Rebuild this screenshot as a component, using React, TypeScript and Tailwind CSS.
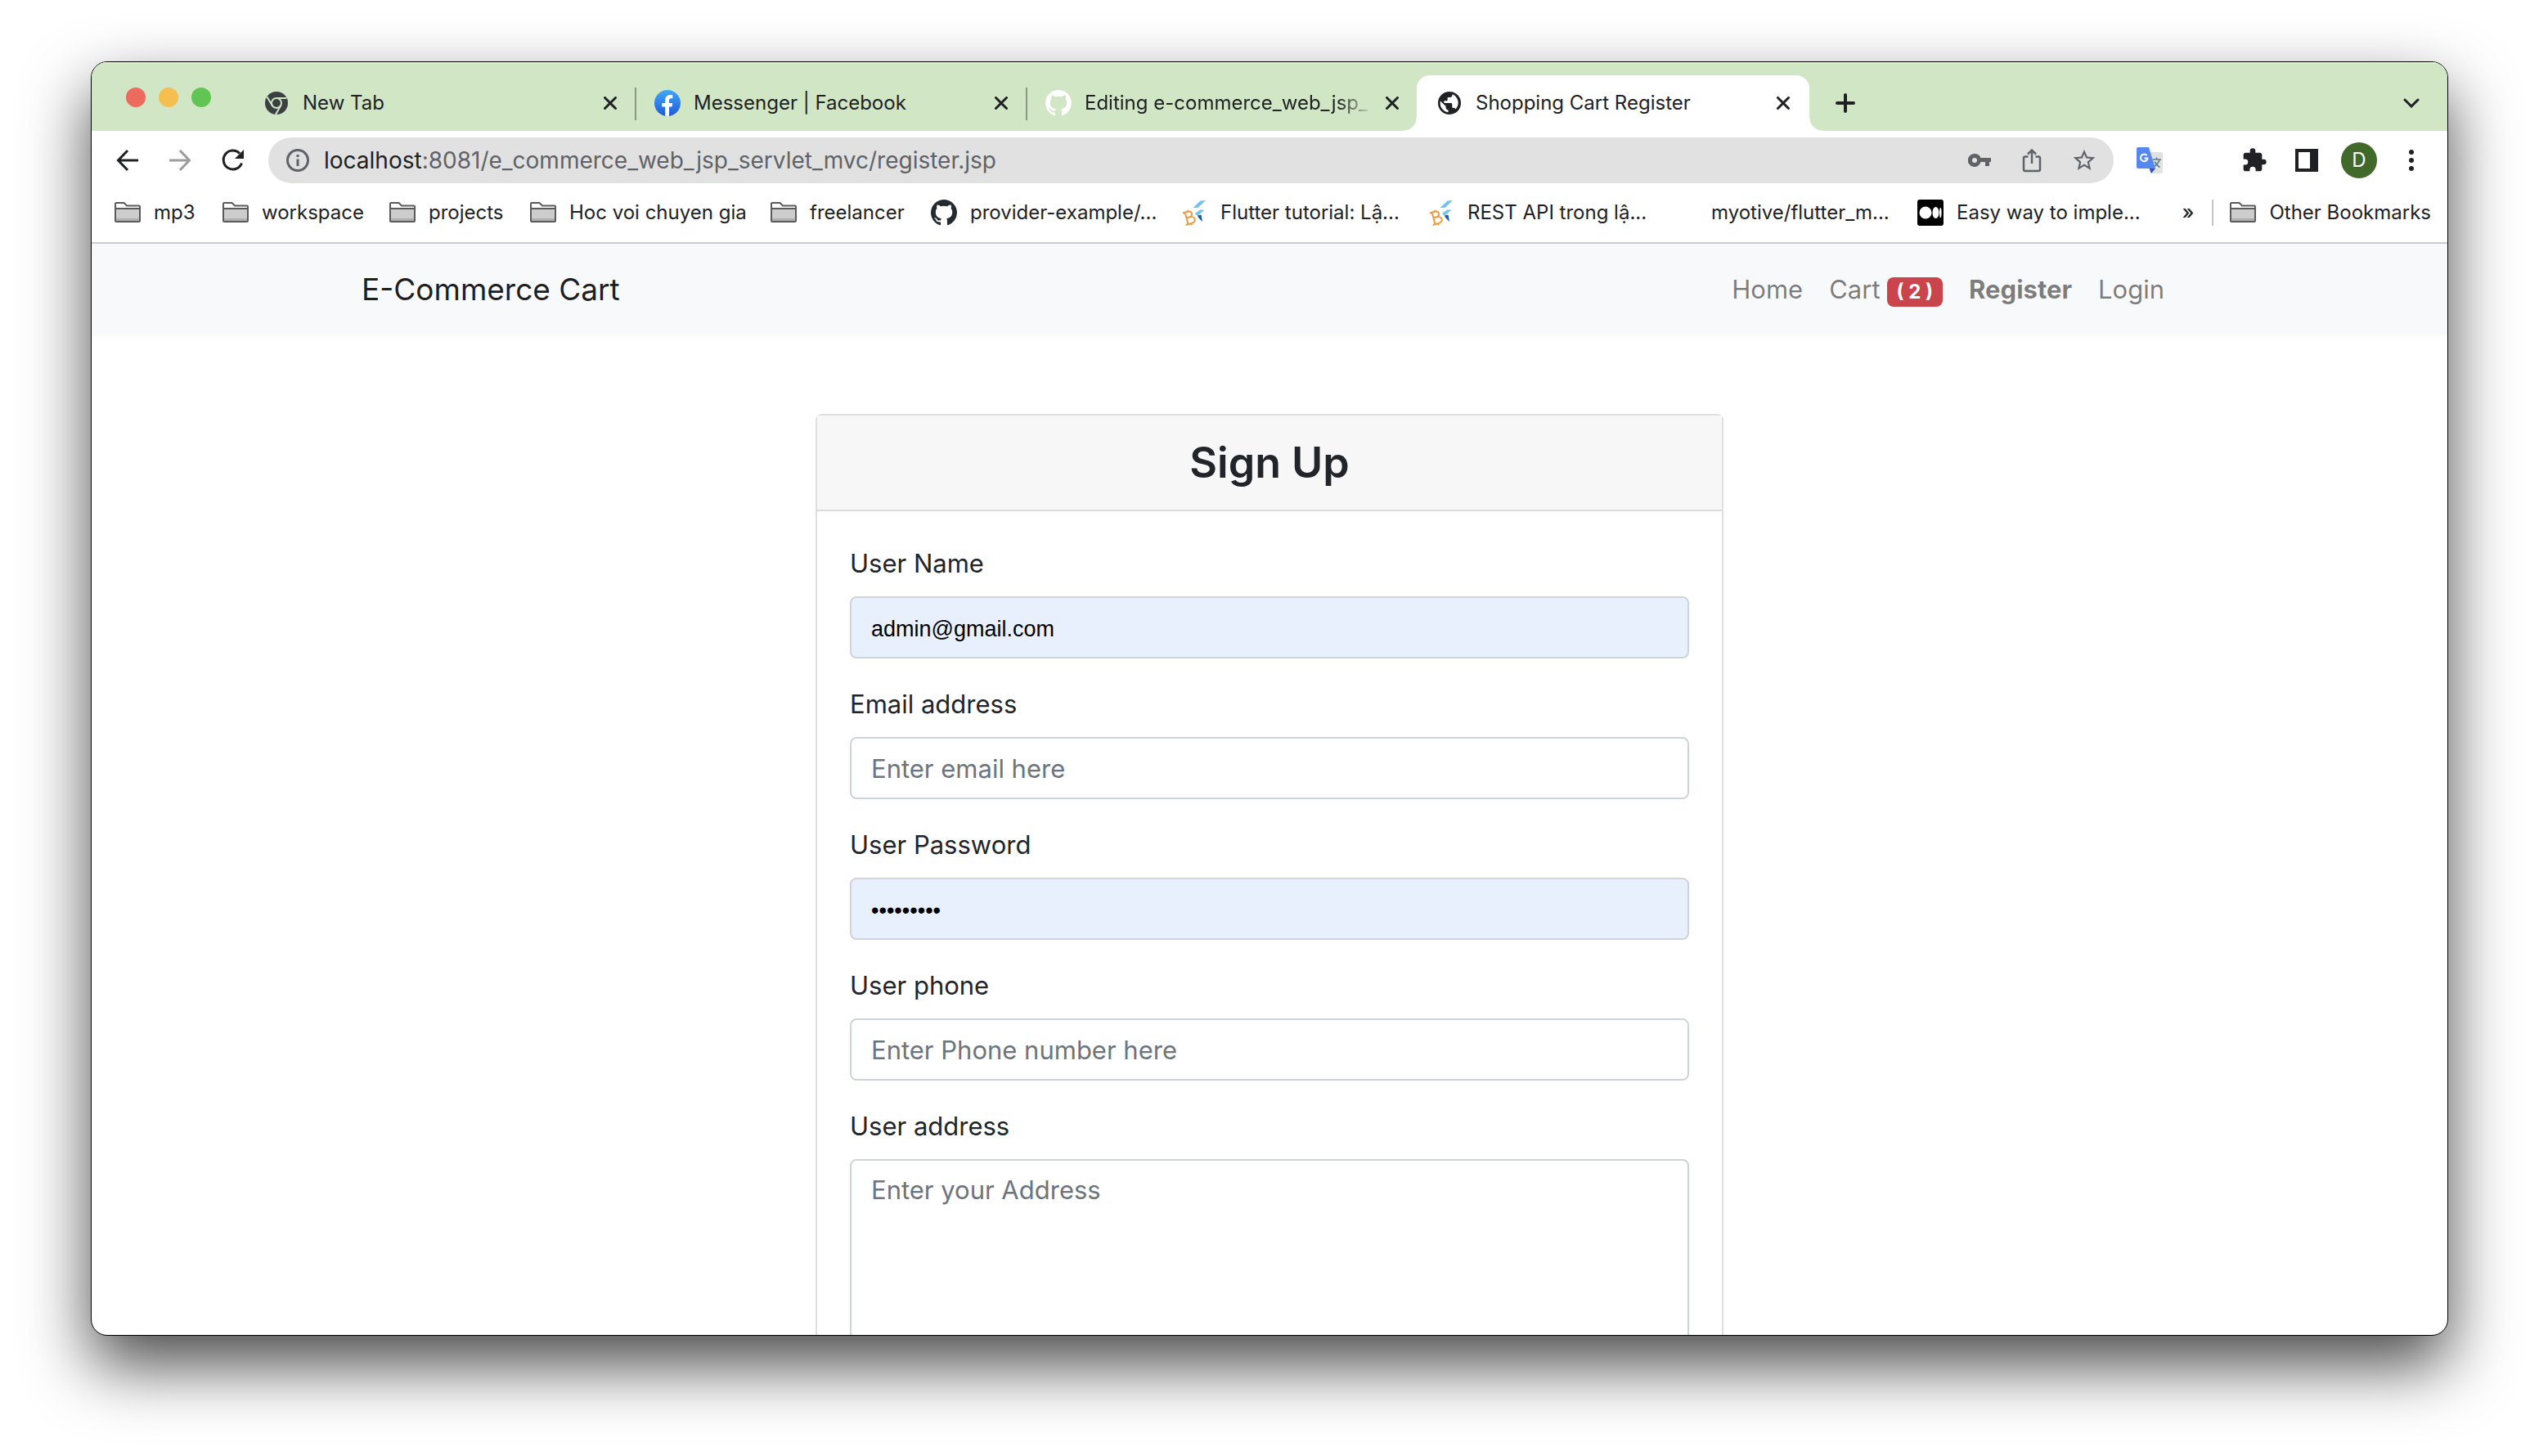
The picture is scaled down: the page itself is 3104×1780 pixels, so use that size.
import React from "react";

type IconProps = { className?: string };

const ChromeIcon = () => (
  <svg viewBox="0 0 28 28" className="size-7">
    <circle cx="14" cy="14" r="14" fill="#3c4043" />
    <circle cx="14" cy="14" r="6" fill="none" stroke="#d1e6c4" strokeWidth="2" />
    <path d="M14 8H26.5M8.8 17L2.5 6.5M19.2 17L13 28" fill="none" stroke="#d1e6c4" strokeWidth="2" />
  </svg>
);

const FacebookIcon = () => (
  <svg viewBox="0 0 32 32" className="size-8">
    <defs>
      <linearGradient id="fb" x1="0" y1="0" x2="0" y2="1">
        <stop offset="0" stopColor="#3fa9f8" />
        <stop offset="1" stopColor="#2158d8" />
      </linearGradient>
    </defs>
    <circle cx="16" cy="16" r="16" fill="url(#fb)" />
    <path
      d="M13.2 31.8V20.6H9.2V16h4v-3.4c0-4.2 2.4-6.5 6.2-6.5 1.3 0 2.9.3 2.9.3v3.9h-1.8c-1.9 0-2.5 1-2.5 2.3V16h4.2l-.7 4.6H18v11.2z"
      fill="#fff"
    />
  </svg>
);

const GithubIcon = ({ className = "" }: IconProps) => (
  <svg viewBox="0 0 16 16" className={`size-8 ${className}`} fill="currentColor">
    <path d="M8 0C3.58 0 0 3.58 0 8c0 3.54 2.29 6.53 5.47 7.59.4.07.55-.17.55-.38 0-.19-.01-.82-.01-1.49-2.01.37-2.53-.49-2.69-.94-.09-.23-.48-.94-.82-1.13-.28-.15-.68-.52-.01-.53.63-.01 1.08.58 1.23.82.72 1.21 1.87.87 2.33.66.07-.52.28-.87.51-1.07-1.78-.2-3.64-.89-3.64-3.95 0-.87.31-1.59.82-2.15-.08-.2-.36-1.02.08-2.12 0 0 .67-.21 2.2.82.64-.18 1.32-.27 2-.27s1.36.09 2 .27c1.53-1.04 2.2-.82 2.2-.82.44 1.1.16 1.92.08 2.12.51.56.82 1.27.82 2.15 0 3.07-1.87 3.75-3.65 3.95.29.25.54.73.54 1.48 0 1.07-.01 1.93-.01 2.2 0 .21.15.46.55.38A8.01 8.01 0 0 0 16 8c0-4.42-3.58-8-8-8z" />
  </svg>
);

const GlobeIcon = () => (
  <svg viewBox="0 0 28 28" className="size-7">
    <circle cx="14" cy="14" r="14" fill="#202124" />
    <path
      d="M17.5 3.2v.9c0 1.7-1.3 3-2.9 3h-2.9v2.8c0 .8-.7 1.4-1.5 1.4H7.4V14h8.5c.8 0 1.4.7 1.4 1.5v4.2h1.5c1.3 0 2.3.8 2.7 1.9A11.3 11.3 0 0 0 17.5 3.2zM12.5 25.2v-2.8c-1.6 0-2.9-1.3-2.9-2.9v-1.4L2.9 11.5A11.3 11.3 0 0 0 12.5 25.2z"
      fill="#fff"
    />
  </svg>
);

const CloseIcon = () => (
  <svg viewBox="0 0 16 16" className="size-4" stroke="#202124" strokeWidth="3" strokeLinecap="round">
    <path d="M1.5 1.5l13 13M14.5 1.5l-13 13" />
  </svg>
);

const FolderIcon = () => (
  <svg viewBox="0 0 32 32" className="size-8 shrink-0">
    <path d="M1 11h30v15.500H1z" fill="#cdcdcd" />
    <path d="M1 23h30v4H1z" fill="#b0b0b0" />
    <path
      d="M2 4h9.500l3.500 3.500h15a1 1 0 0 1 1 1V26a1 1 0 0 1-1 1H2a1 1 0 0 1-1-1V5a1 1 0 0 1 1-1zM1 11h30"
      fill="none"
      stroke="#5a5a5a"
      strokeWidth="2"
    />
  </svg>
);

const FlutterBIcon = () => (
  <svg viewBox="0 0 32 32" className="size-8 shrink-0">
    <path d="M14.500 10L23.500 1.500 30 1 20.500 10z" fill="#6fc4f0" />
    <path d="M17 17l6-4.500h5.500L20 20z" fill="#6fc4f0" />
    <path d="M20 19.500l4.500-1 1.500 8.500-5-5z" fill="#1f5a9c" />
    <g transform="rotate(-15 10 22)" fill="none" stroke="#ee9b3f" strokeWidth="2">
      <path d="M6.500 14v16M3.500 14.500H10c5.500 0 5.500 7 0 7H6.500M10 21.500c8 0 8 8 0 8H3.500M10.500 12.500v2M10.500 29.500v2" />
    </g>
  </svg>
);

const MediumIcon = () => (
  <svg viewBox="0 0 32 32" className="size-8 shrink-0">
    <rect width="32" height="32" rx="3" fill="#000" />
    <circle cx="10" cy="16" r="7.500" fill="#fff" />
    <ellipse cx="22.500" cy="16" rx="4" ry="7" fill="#fff" />
    <ellipse cx="28.300" cy="16" rx="1.300" ry="6.300" fill="#fff" />
  </svg>
);

const TranslateIcon = () => (
  <svg viewBox="0 0 32 32" className="size-8">
    <path d="M12 6h18a2 2 0 0 1 2 2V30a2 2 0 0 1-2 2H18z" fill="#e2e2e2" />
    <path d="M15.500 26H23l-5 6z" fill="#3b4fb8" />
    <path d="M2 0h13L23 26H2a2 2 0 0 1-2-2V2a2 2 0 0 1 2-2z" fill="#5588ee" />
    <path d="M12.600 10.200A4.300 4.300 0 1 0 13.500 13.400H9.500" fill="none" stroke="#fff" strokeWidth="2" />
    <path d="M19.500 15H30M24.500 12.500v2.500M28 15c-1 4-4 7-6.500 8.500M22 17.500c1.500 3 3.500 5 6.500 7" fill="none" stroke="#607d8b" strokeWidth="1.700" />
  </svg>
);

type Tab = { title: string; icon: React.ReactNode; active?: boolean; divided?: boolean; faded?: boolean };

const tabs: Tab[] = [
  { title: "New Tab", icon: <ChromeIcon />, divided: true },
  { title: "Messenger | Facebook", icon: <FacebookIcon />, divided: true },
  { title: "Editing e-commerce_web_jsp_", icon: <GithubIcon className="text-white" />, faded: true },
  { title: "Shopping Cart Register", icon: <GlobeIcon />, active: true },
];

type Bookmark = { title: string; icon: React.ReactNode; width: string };

const bookmarks: Bookmark[] = [
  { title: "mp3", icon: <FolderIcon />, width: "w-[132px]" },
  { title: "workspace", icon: <FolderIcon />, width: "w-[204px]" },
  { title: "projects", icon: <FolderIcon />, width: "w-[172px]" },
  { title: "Hoc voi chuyen gia", icon: <FolderIcon />, width: "w-[294px]" },
  { title: "freelancer", icon: <FolderIcon />, width: "w-[196px]" },
  { title: "provider-example/...", icon: <GithubIcon className="shrink-0 text-[#24292f]" />, width: "w-[306px]" },
  { title: "Flutter tutorial: Lậ...", icon: <FlutterBIcon />, width: "w-[302px]" },
  { title: "REST API trong lậ...", icon: <FlutterBIcon />, width: "w-[298px]" },
  { title: "myotive/flutter_m...", icon: <span className="size-8 shrink-0" />, width: "w-[300px]" },
  { title: "Easy way to imple...", icon: <MediumIcon />, width: "w-[300px]" },
];

function TabStrip() {
  return (
    <div className="flex h-[84px] items-end border-t-2 border-[#dcf0cf] bg-[#d1e6c4] pr-7">
      <div className="flex h-full w-[188px] shrink-0 items-center gap-4 pl-[42px]">
        <button aria-label="Close window" className="size-6 rounded-full bg-[#ed6a5e]" />
        <button aria-label="Minimize window" className="size-6 rounded-full bg-[#f5bf4f]" />
        <button aria-label="Zoom window" className="size-6 rounded-full bg-[#61c554]" />
      </div>
      <div role="tablist" className="flex items-end">
        {tabs.map((tab) => (
          <div
            key={tab.title}
            role="tab"
            aria-selected={!!tab.active}
            className={`relative flex h-[68px] items-center pr-4 ${tab.active ? "-ml-0.5 w-[480px] rounded-t-2xl bg-white pl-6" : "w-[478px] pl-[22px]"}`}
          >
            {tab.active && (
              <>
                <span className="absolute bottom-0 -left-4 size-4 bg-[radial-gradient(circle_at_0_0,#d1e6c4_15px,#fff_16px)]" />
                <span className="absolute -right-4 bottom-0 size-4 bg-[radial-gradient(circle_at_100%_0,#d1e6c4_15px,#fff_16px)]" />
              </>
            )}
            <span className="flex w-8 shrink-0 justify-center">{tab.icon}</span>
            <span
              className={`ml-4 min-w-0 flex-1 text-2xl whitespace-nowrap ${tab.faded ? "[mask-image:linear-gradient(to_right,#000_88%,transparent)]" : ""}`}
            >
              {tab.title}
            </span>
            <button aria-label={`Close ${tab.title}`} className="ml-2 flex size-8 shrink-0 items-center justify-center">
              <CloseIcon />
            </button>
            {tab.divided && <span className="absolute top-[15px] right-0 h-10 w-0.5 bg-[#8a9a82]" />}
          </div>
        ))}
      </div>
      <button aria-label="New tab" className="ml-7 flex h-[68px] w-8 items-center justify-center">
        <svg viewBox="0 0 24 24" className="size-6" stroke="#202124" strokeWidth="4" strokeLinecap="round">
          <path d="M12 2v20M2 12h20" />
        </svg>
      </button>
      <button aria-label="Search tabs" className="ml-auto flex h-[68px] w-8 items-center justify-center">
        <svg viewBox="0 0 20 12" className="h-3 w-5" fill="none" stroke="#202124" strokeWidth="3" strokeLinecap="round">
          <path d="M2 2l8 8 8-8" />
        </svg>
      </button>
    </div>
  );
}

function Toolbar() {
  return (
    <div className="flex h-[72px] items-center pr-7 pl-7">
      <button aria-label="Back" className="flex w-8 justify-center">
        <svg viewBox="0 0 28 28" className="size-7" fill="none" stroke="#202124" strokeWidth="3">
          <path d="M27 14H3M14 2L2.500 14 14 26" />
        </svg>
      </button>
      <button aria-label="Forward" className="ml-8 flex w-8 justify-center">
        <svg viewBox="0 0 28 28" className="size-7" fill="none" stroke="#9b9c9d" strokeWidth="3">
          <path d="M1 14h24M14 2l11.500 12L14 26" />
        </svg>
      </button>
      <button aria-label="Reload" className="ml-8 flex w-8 justify-center">
        <svg viewBox="0 0 28 28" className="size-7" fill="none" stroke="#202124" strokeWidth="3">
          <path d="M25.500 17.500A11.500 11.500 0 1 1 23 5.500" />
          <path d="M28 1v11H17z" fill="#202124" stroke="none" />
        </svg>
      </button>
      <div className="ml-7 flex h-14 min-w-0 flex-1 items-center rounded-full bg-[#e1e1e1] pr-5 pl-[22px]">
        <svg viewBox="0 0 28 28" className="size-7 shrink-0" fill="none" stroke="#5f6368" strokeWidth="3">
          <circle cx="14" cy="14" r="12.500" />
          <path d="M14 12.500V21M14 7v3" />
        </svg>
        <div
          role="textbox"
          aria-label="Address and search bar"
          tabIndex={0}
          className="ml-[18px] flex-1 text-[28px] leading-10 whitespace-nowrap text-[#5f6368]"
        >
          <span className="text-[#202124]">localhost</span>:8081/e_commerce_web_jsp_servlet_mvc/register.jsp
        </div>
        <div className="flex items-center gap-8">
          <button aria-label="Passwords" className="flex w-8 justify-center">
            <svg viewBox="0 0 28 16" className="h-4 w-7" fill="#5f6368">
              <path fillRule="evenodd" d="M8 0a8 8 0 0 1 7.500 5H28v5h-2v5h-5v-5h-5.500A8 8 0 1 1 8 0zm0 5a3 3 0 1 0 0 6 3 3 0 0 0 0-6z" />
            </svg>
          </button>
          <button aria-label="Share" className="flex w-8 justify-center">
            <svg viewBox="0 0 24 30" className="h-[30px] w-6" fill="none" stroke="#5f6368" strokeWidth="2.500">
              <path d="M7.500 10.500H4a2 2 0 0 0-2 2V26a2 2 0 0 0 2 2h16a2 2 0 0 0 2-2V12.500a2 2 0 0 0-2-2h-3.500M12 19V2.500M7 7.500L12 2.500 17 7.500" />
            </svg>
          </button>
          <button aria-label="Bookmark this page" className="flex w-8 justify-center">
            <svg viewBox="0 0 24 24" className="size-8" fill="#5f6368">
              <path d="M22 9.240l-7.190-.620L12 2 9.190 8.630 2 9.240l5.460 4.730L5.820 21 12 17.270 18.180 21l-1.630-7.030L22 9.240zM12 15.400l-3.760 2.270 1-4.280-3.320-2.880 4.380-.380L12 6.100l1.710 4.040 4.380.380-3.320 2.880 1 4.280L12 15.400z" />
            </svg>
          </button>
        </div>
      </div>
      <div className="ml-7 flex items-center">
        <button aria-label="Google Translate" className="flex w-8 justify-center">
          <TranslateIcon />
        </button>
        <button aria-label="Extensions" className="ml-24 flex w-8 justify-center">
          <svg viewBox="0 0 24 24" className="size-8" fill="#202124">
            <path d="M20.500 11H19V7c0-1.100-.9-2-2-2h-4V3.500a2.500 2.500 0 0 0-5 0V5H4c-1.100 0-2 .9-2 2v3.800h1.500a2.700 2.700 0 0 1 0 5.400H2V20c0 1.100.9 2 2 2h3.800v-1.500a2.700 2.700 0 0 1 5.400 0V22H17c1.100 0 2-.9 2-2v-4h1.500a2.500 2.500 0 0 0 0-5z" />
          </svg>
        </button>
        <button aria-label="Side panel" className="ml-8 flex w-8 justify-center">
          <svg viewBox="0 0 28 28" className="size-7">
            <path fillRule="evenodd" d="M0 0h28v28H0zM4 4v20h14V4z" fill="#202124" />
          </svg>
        </button>
        <button className="ml-[26px] flex size-11 items-center justify-center rounded-full bg-[#41692a] text-2xl text-white">D</button>
        <button aria-label="Menu" className="ml-[26px] flex w-8 justify-center">
          <svg viewBox="0 0 6 26" className="h-[26px] w-1.5" fill="#202124">
            <circle cx="3" cy="3" r="3" />
            <circle cx="3" cy="13" r="3" />
            <circle cx="3" cy="23" r="3" />
          </svg>
        </button>
      </div>
    </div>
  );
}

function BookmarksBar() {
  return (
    <div className="flex h-[66px] items-center border-b-2 border-[#cbcdcc] pb-2 pl-7 text-2xl">
      {bookmarks.map((b) => (
        <a key={b.title} href="#" className={`flex shrink-0 items-center gap-4 whitespace-nowrap ${b.width}`}>
          {b.icon}
          {b.title}
        </a>
      ))}
      <button aria-label="More bookmarks" className="ml-auto font-medium">
        »
      </button>
      <span className="ml-[22px] h-8 w-0.5 bg-[#c4c6c8]" />
      <a href="#" className="mr-5 ml-5 flex items-center gap-4 whitespace-nowrap">
        <FolderIcon />
        Other Bookmarks
      </a>
    </div>
  );
}

function Navbar() {
  return (
    <nav className="h-28 bg-[#f8f9fb]">
      <div className="mx-auto flex h-full w-full max-w-[2280px] items-center justify-between px-[30px]">
        <a href="#" className="text-[37px] leading-[60px] text-black/90">
          E-Commerce Cart
        </a>
        <div className="flex items-baseline text-[31px] leading-12 text-black/50">
          <a href="#" className="px-4">
            Home
          </a>
          <a href="#" className="flex items-baseline gap-2 px-4">
            Cart
            <span className="rounded-lg bg-[#c9444b] px-3 py-1.5 text-2xl leading-6 font-bold text-white">( 2 )</span>
          </a>
          <a href="#" className="px-4 font-bold">
            Register
          </a>
          <a href="#" className="px-4">
            Login
          </a>
        </div>
      </div>
    </nav>
  );
}

type FieldProps = { id: string; label: string; type?: string; placeholder?: string; value?: string };

function Field({ id, label, type = "text", placeholder, value }: FieldProps) {
  return (
    <div className="mb-8">
      <label htmlFor={id} className="mb-4 block leading-12">
        {label}
      </label>
      <input
        id={id}
        type={type}
        placeholder={placeholder}
        defaultValue={value}
        className={`block h-[76px] w-full rounded-lg border-2 border-[#ced4da] px-6 placeholder:text-[#6c757d] ${value ? "bg-[#e8effd] pt-1 font-['Liberation_Sans',sans-serif] text-[27px] text-black" : "bg-white"}`}
      />
    </div>
  );
}

function SignUpCard() {
  return (
    <div className="mx-auto w-1/2 rounded-lg border-2 border-[#dfdfdf] bg-white">
      <h3 className="border-b-2 border-[#dadbdb] bg-[#f7f7f7] py-6 text-center text-[52px] leading-[67px] font-semibold">Sign Up</h3>
      <form className="p-10 text-[31px]">
        <Field id="name" label="User Name" value="admin@gmail.com" />
        <Field id="email" label="Email address" type="email" placeholder="Enter email here" />
        <Field id="password" label="User Password" type="password" value="adminpass" />
        <Field id="phone" label="User phone" type="tel" placeholder="Enter Phone number here" />
        <label htmlFor="address" className="mb-4 block leading-12">
          User address
        </label>
        <textarea
          id="address"
          rows={5}
          placeholder="Enter your Address"
          className="block w-full rounded-lg border-2 border-[#ced4da] px-6 py-3 leading-12 placeholder:text-[#6c757d]"
        />
      </form>
    </div>
  );
}

export default function App() {
  return (
    <div className="h-screen overflow-hidden bg-white px-[111px] pt-[75px] pb-[147px] font-[Inter,'Noto_Sans',sans-serif] text-[#202124]">
      <div className="flex h-full flex-col overflow-hidden rounded-[20px] border border-black bg-white shadow-[0_36px_80px_rgba(0,0,0,0.71)]">
        <TabStrip />
        <Toolbar />
        <BookmarksBar />
        <main className="min-h-0 flex-1 overflow-hidden text-[#212529]">
          <Navbar />
          <div className="mx-auto w-full max-w-[2280px] px-[30px] pt-24">
            <SignUpCard />
          </div>
        </main>
      </div>
    </div>
  );
}
